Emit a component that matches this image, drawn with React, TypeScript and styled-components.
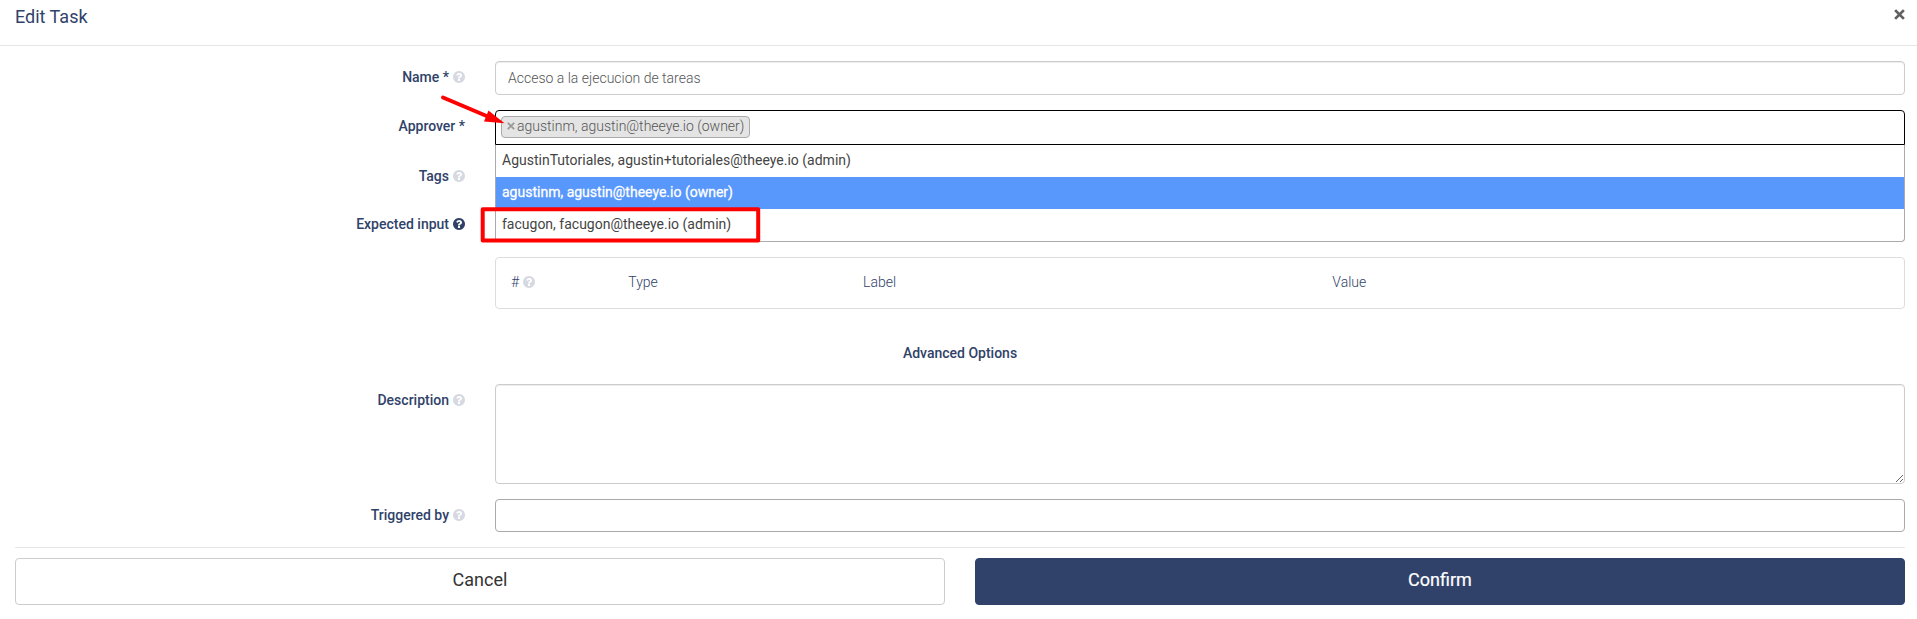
import React from 'react';
import styled, { createGlobalStyle, css } from 'styled-components';

const navy = '#304269';

const GlobalStyle = createGlobalStyle`
  *, *::before, *::after { box-sizing: border-box; }
  body {
    margin: 0;
    background: #fff;
    color: ${navy};
    font: 400 14px/20px Roboto, "Open Sans", sans-serif;
    overflow: hidden;
  }
`;

const Dialog = styled.div`
  position: relative;
  display: flex;
  flex-direction: column;
  height: 619px;
`;

const Header = styled.header`
  display: flex;
  justify-content: space-between;
  align-items: flex-start;
  height: 46px;
  padding: 4px 12px 0 15px;
  border-bottom: 1px solid #e5e5e5;
`;

const Title = styled.h4`
  margin: 0;
  font-size: 18px;
  font-weight: 400;
  line-height: 26px;
`;

const Close = styled.button`
  display: flex;
  padding: 5px 0 0;
  border: 0;
  background: none;
`;

const Form = styled.form`
  display: flex;
  flex-direction: column;
  gap: 15px;
  padding: 15px 12px 0 15px;
`;

const Group = styled.div<{ $h: number }>`
  display: grid;
  grid-template-columns: 450px 1410px;
  column-gap: 30px;
  height: ${(p) => p.$h}px;
`;

const Label = styled.label`
  display: flex;
  justify-content: flex-end;
  align-items: center;
  gap: 4px;
  height: 20px;
  margin-top: 6px;
  font-weight: 500;
`;

const field = css`
  width: 100%;
  border-radius: 4px;
  background: #fff;
  font: 300 14px/20px Roboto, sans-serif;
  outline: none;
`;

const Input = styled.input`
  ${field}
  height: 34px;
  padding: 6px 12px;
  border: 1px solid #ccc;
  box-shadow: inset 0 1px 1px rgba(0, 0, 0, 0.075);
  color: #555;
`;

const TextArea = styled.textarea`
  ${field}
  display: block;
  height: 100px;
  border: 1px solid #ccc;
  box-shadow: inset 0 1px 1px rgba(0, 0, 0, 0.075);
  resize: vertical;
`;

const Tokens = styled.div<{ $open?: boolean }>`
  ${field}
  display: flex;
  align-items: flex-start;
  height: ${(p) => (p.$open ? 35 : 33)}px;
  padding: 5px;
  border: 1px solid ${(p) => (p.$open ? '#000' : '#aaa')};
  ${(p) => p.$open && 'border-radius: 4px 4px 0 0;'}
`;

const Token = styled.span`
  display: flex;
  align-items: center;
  gap: 2px;
  height: 22px;
  padding: 0 5px 2px;
  border: 1px solid #aaa;
  border-radius: 4px;
  background: #e4e4e4;
  color: #555;
`;

const Select = styled.div`
  position: relative;
`;

const Menu = styled.ul`
  position: absolute;
  z-index: 2;
  top: 35px;
  left: 0;
  right: 0;
  margin: 0;
  padding: 0;
  list-style: none;
  border: 1px solid #aaa;
  border-top: 0;
  border-radius: 0 0 4px 4px;
  background: #fff;
`;

const Option = styled.li<{ $active?: boolean }>`
  height: 32px;
  padding: 5px 6px 7px;
  color: ${(p) => (p.$active ? '#fff' : '#444')};
  background: ${(p) => (p.$active ? '#5897fb' : 'transparent')};
  ${(p) => p.$active && '-webkit-text-stroke: 0.3px #fff;'}
`;

const PanelColumn = styled.div`
  padding-top: 49px;
`;

const Panel = styled.div`
  display: grid;
  grid-template-columns: 1fr 2fr 4fr 5fr;
  align-items: center;
  height: 52px;
  border: 1px solid #ddd;
  border-radius: 4px;
  font-weight: 300;
`;

const Column = styled.div`
  display: flex;
  align-items: center;
  gap: 4px;
  padding: 0 15px 2px;
`;

const SectionTitle = styled.div`
  height: 45px;
  padding-top: 19px;
  text-align: center;
  font-weight: 500;
`;

const Footer = styled.footer`
  display: grid;
  grid-template-columns: 930px 930px;
  gap: 30px;
  margin: 15px 12px 0 15px;
  padding-top: 10px;
  border-top: 1px solid #e5e5e5;
`;

const Button = styled.button<{ $primary?: boolean }>`
  height: 47px;
  padding: 0 0 3px;
  border: 1px solid ${(p) => (p.$primary ? navy : '#ccc')};
  border-radius: 4px;
  background: ${(p) => (p.$primary ? navy : '#fff')};
  color: ${(p) => (p.$primary ? '#fff' : '#333')};
  font: 400 18px/24px Roboto, sans-serif;
  ${(p) => p.$primary && '-webkit-text-stroke: 0.2px #fff;'}
`;

const Overlay = styled.svg`
  position: absolute;
  z-index: 3;
  top: 0;
  left: 0;
  pointer-events: none;
`;

const HelpIcon = styled(({ className }: { className?: string; $solid?: boolean }) => (
  <svg className={className} width="12" height="12" viewBox="0 0 1536 1536">
    <path
      fill="currentColor"
      d="M896 1248v-192q0-14-9-23t-23-9h-192q-14 0-23 9t-9 23v192q0 14 9 23t23 9h192q14 0 23-9t9-23zm256-672q0-88-55.500-163t-138.500-116-170-41q-243 0-371 213-15 24 8 42l132 100q7 6 19 6 16 0 25-12 53-68 86-92 34-24 86-24 48 0 85.500 26t37.500 59q0 38-20 61t-68 45q-63 28-115.500 86.500t-52.500 125.500v36q0 14 9 23t23 9h192q14 0 23-9t9-23q0-19 21.500-49.500t54.500-49.500q32-18 49-28.500t46-35 44.500-48 28-60.500 12.500-81zm384 192q0 209-103 385.500t-279.500 279.500-385.500 103-385.500-103-279.500-279.500-103-385.500 103-385.500 279.500-279.500 385.500-103 385.500 103 279.500 279.500 103 385.500z"
    />
  </svg>
))`
  flex: none;
  color: ${(p) => (p.$solid ? navy : '#d6d9e1')};
`;

const Cross = ({ size, color, width }: { size: number; color: string; width: number }) => (
  <svg width={size} height={size} viewBox="0 0 10 10">
    <path d="M1 1l8 8M9 1l-8 8" stroke={color} strokeWidth={width} />
  </svg>
);

const options = [
  'AgustinTutoriales, agustin+tutoriales@theeye.io (admin)',
  'agustinm, agustin@theeye.io (owner)',
  'facugon, facugon@theeye.io (admin)',
];
const selected = options[1];

export default function App() {
  return (
    <>
      <GlobalStyle />
      <Dialog>
        <Header>
          <Title>Edit Task</Title>
          <Close type="button" aria-label="Close">
            <Cross size={11} color="#606060" width={2.5} />
          </Close>
        </Header>
        <Form>
          <Group $h={34}>
            <Label>Name * <HelpIcon /></Label>
            <Input defaultValue="Acceso a la ejecucion de tareas" />
          </Group>
          <Group $h={35}>
            <Label>Approver *</Label>
            <Select>
              <Tokens $open>
                <Token><Cross size={8} color="#999" width={2.2} />{selected}</Token>
              </Tokens>
              <Menu>
                {options.map((o) => (
                  <Option key={o} $active={o === selected}>{o}</Option>
                ))}
              </Menu>
            </Select>
          </Group>
          <Group $h={33}>
            <Label>Tags <HelpIcon /></Label>
            <Tokens />
          </Group>
          <Group $h={101}>
            <Label>Expected input <HelpIcon $solid /></Label>
            <PanelColumn>
              <Panel>
                <Column># <HelpIcon /></Column>
                <Column>Type</Column>
                <Column>Label</Column>
                <Column>Value</Column>
              </Panel>
            </PanelColumn>
          </Group>
          <SectionTitle>Advanced Options</SectionTitle>
          <Group $h={100}>
            <Label>Description <HelpIcon /></Label>
            <TextArea />
          </Group>
          <Group $h={33}>
            <Label>Triggered by <HelpIcon /></Label>
            <Tokens />
          </Group>
        </Form>
        <Footer>
          <Button type="button">Cancel</Button>
          <Button type="button" $primary>Confirm</Button>
        </Footer>
        <Overlay width="1917" height="619">
          <path d="M443 97.500L489 117" stroke="#f00" strokeWidth="4" strokeLinecap="round" />
          <path d="M488.500 110.500L504.500 123.200L484 121.500z" fill="#f00" />
          <rect x="482.700" y="209.300" width="275.500" height="31.200" fill="none" stroke="#f00" strokeWidth="4" strokeLinejoin="round" />
        </Overlay>
      </Dialog>
    </>
  );
}
